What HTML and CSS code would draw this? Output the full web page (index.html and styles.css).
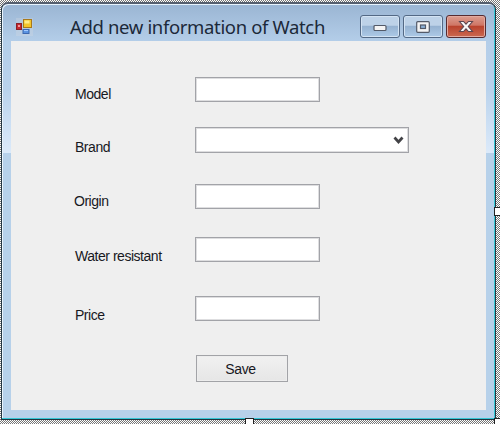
FILE: index.html
```
<!DOCTYPE html>
<html lang="en">
<head>
<meta charset="utf-8">
<title>Add new information of Watch</title>
<link rel="stylesheet" href="styles.css">
</head>
<body>
<main class="designer">
  <section class="window">
    <header class="titlebar">
      <svg class="app-icon" width="17" height="18" viewBox="0 0 17 18">
        <path d="M0 0h17v18H0z" fill="#d8dce0" opacity=".3"/>
        <rect x="7.500" y="1.500" width="8" height="8" fill="#f3c52b" stroke="#a8791b"/>
        <path d="M8.500 2.500h5v3h-5z" fill="#ffec87"/>
        <rect x=".5" y="5.500" width="5" height="6" fill="#c52830" stroke="#8b2027"/>
        <path d="M2 7h2v2H2z" fill="#f4969b"/>
        <rect x="7" y="11.500" width="6" height="4" fill="#5b94e2" stroke="#3d69b0"/>
        <path d="M8 12h4v1H8z" fill="#a4cbff"/>
      </svg>
      <h1 class="title">Add new information of Watch</h1>
      <div class="controls">
        <button class="control" aria-label="Minimize"><svg width="14" height="8" viewBox="0 0 14 8"><rect x="1" y="1.500" width="12" height="5" rx="1" fill="#f4f4f4" stroke="#535a68" stroke-width="1.200"/></svg></button>
        <button class="control maximize" aria-label="Maximize"><svg width="14" height="12" viewBox="0 0 14 12"><rect x=".7" y=".7" width="12.600" height="10.600" rx="1" fill="#f4f4f4" stroke="#535a68" stroke-width="1.200"/><rect x="4.500" y="4" width="5" height="3.500" fill="#8bafd5" stroke="#535a68" stroke-width="1.200"/></svg></button>
        <button class="control close" aria-label="Close"><svg width="16" height="13" viewBox="0 0 16 13"><path d="M1.500 1.500H5.500L8 4.200 10.500 1.500H14.500L10.300 6.500 14.500 11.500H10.500L8 8.800 5.500 11.500H1.500L5.700 6.500Z" fill="#f7f7f7" stroke="#5d4650" stroke-width="1.100"/></svg></button>
      </div>
    </header>
    <form class="form">
      <div class="row model"><label for="model">Model</label><input id="model"></div>
      <div class="row brand"><label for="brand">Brand</label><div class="combo" id="brand"><svg width="11" height="9" viewBox="0 0 11 9"><path d="M1.500 1.500 5.500 6 9.500 1.500" fill="none" stroke="#424246" stroke-width="2.700"/></svg></div></div>
      <div class="row origin"><label for="origin">Origin</label><input id="origin"></div>
      <div class="row water"><label for="water">Water resistant</label><input id="water"></div>
      <div class="row price"><label for="price">Price</label><input id="price"></div>
      <button class="save" type="button">Save</button>
    </form>
  </section>
  <i class="handle right"></i>
  <i class="handle bottom"></i>
  <i class="handle corner"></i>
</main>
</body>
</html>
```
FILE: styles.css
```
* { box-sizing: border-box; }
body { margin: 0; overflow: hidden; }
.designer {
  position: relative;
  width: 500px;
  height: 424px;
  padding: 2px 0 0 1px;
  overflow: hidden;
  background: repeating-conic-gradient(#777 0 25%, #fff 0 50%) 0 0 / 2px 2px;
}
.window {
  width: 495px;
  height: 418px;
  padding: 0 9px 8px 9px;
  border: 1px solid #23343f;
  border-top: 2px solid #555e6d;
  border-radius: 7px 7px 0 0;
  box-shadow: inset -1px -1px #35c6d5, inset 1px 1px #e8f3fc;
  background: linear-gradient(#9ab5d3 0, #b4cee9 38px, #b9d2ec 85px, #dceafa 149px, #b7d1ea 149px);
}
.titlebar {
  height: 37px;
  display: flex;
  align-items: flex-start;
}
.app-icon { margin: 14px 0 0 5px; flex: none; }
.title {
  width: 284px;
  flex: none;
  margin: 10px 0 0 37px;
  font: 400 18.500px/26px "Noto Sans", sans-serif;
  letter-spacing: -.35px;
  color: #1c2939;
  white-space: nowrap;
}
.controls { display: flex; gap: 3px; margin: 11px 0 0 6px; }
.control {
  width: 40px;
  height: 23px;
  flex: none;
  display: flex;
  align-items: center;
  justify-content: center;
  padding: 3px 0 0;
  border: 1px solid #536985;
  border-radius: 3px;
  background: linear-gradient(#bdd2e8 0 45%, #94b1d0 46%, #adcae7);
  box-shadow: inset 0 0 0 1px #d3e3f3;
}
.maximize, .close { padding-top: 0; }
.close {
  border-color: #572b30;
  background: linear-gradient(#dc9d90 0, #cf7564 45%, #b8402b 46%, #cb6951);
  box-shadow: inset 0 0 0 1px #e2aaa0;
}
.form {
  height: 369px;
  padding: 36px 0 0 64px;
  background: #efefef;
  font: 14px/18px "Liberation Sans", sans-serif;
  color: #17181e;
}
.row { display: flex; height: 25px; }
.row label {
  width: 120px;
  padding-top: 8px;
  letter-spacing: -.47px;
  white-space: nowrap;
}
.row input, .combo {
  width: 125px;
  height: 100%;
  border: 1px solid #a2a3a8;
  background: #fff;
  box-shadow: inset 0 0 0 1px #dedee0;
}
.row .combo {
  width: 214px;
  display: flex;
  align-items: center;
  justify-content: flex-end;
  padding-right: 4px;
}
.brand { height: 26px; margin-top: 25px; }
.brand label { padding-top: 11px; }
.origin { margin-top: 31px; }
.origin label { text-indent: -1px; }
.water { margin-top: 28px; }
.water label, .price label { padding-top: 10px; }
.price { margin-top: 34px; }
.save {
  display: block;
  width: 92px;
  height: 27px;
  margin: 34px 0 0 121px;
  padding: 0 3px 0 0;
  border: 1px solid #a2a3a7;
  background: linear-gradient(#f1f1f1, #e6e6e6);
  box-shadow: inset 0 0 0 1px #ededed;
  font: 14px/18px "Liberation Sans", sans-serif;
  letter-spacing: -.3px;
  color: #17181e;
}
.handle {
  position: absolute;
  width: 9px;
  height: 9px;
  background: #fff;
  border: 1px solid #222;
}
.right { left: 494px; top: 207px; }
.bottom { left: 245px; top: 418px; }
.corner { left: 494px; top: 418px; }
```
